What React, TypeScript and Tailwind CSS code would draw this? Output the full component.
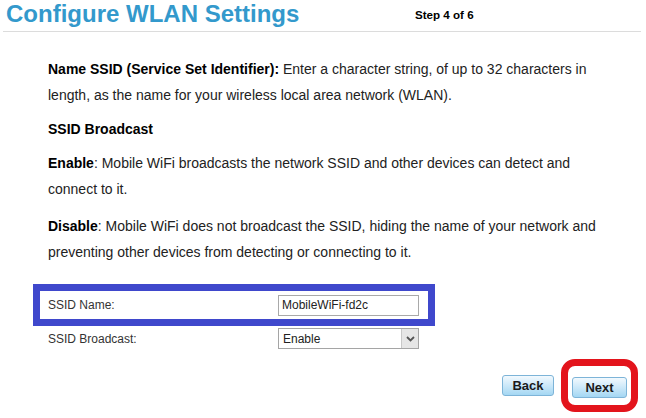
import React from "react";

export default function App() {
  const font = { fontFamily: '"Liberation Sans", Arial, sans-serif' };
  return (
    <div className="w-[646px] h-[418px] bg-white overflow-hidden text-[#222]" style={font}>
      <div className="mx-[3px] w-[638px] h-[32px] border-b border-[#dcdcdc] flex">
        <div className="w-[412px] pl-[3px] text-[24px] leading-[28px] font-bold text-[#3399cc]">
          Configure WLAN Settings
        </div>
        <div className="pt-[1px] text-[11.6px] leading-[28px] font-bold text-black">Step 4 of 6</div>
      </div>

      <div className="pl-[48px] pr-[30px] pt-[24px] text-[14px] leading-[26px]">
        <p className="mb-[8px]">
          <b className="text-black">Name SSID (Service Set Identifier):</b> Enter a character string, of up to 32
          characters in length, as the name for your wireless local area network (WLAN).
        </p>
        <p className="mb-[8px] font-bold text-black">SSID Broadcast</p>
        <p className="mb-[11px]">
          <b className="text-black">Enable</b>: Mobile WiFi broadcasts the network SSID and other devices can detect
          and connect to it.
        </p>
        <p>
          <b className="text-black">Disable</b>: Mobile WiFi does not broadcast the SSID, hiding the name of your
          network and preventing other devices from detecting or connecting to it.
        </p>
      </div>

      <div className="mt-[19px]">
        <div className="ml-[33px] w-[402px] h-[42px] border-[7px] border-[#3f48cc] flex items-center pl-[8px] text-[12px] text-[#333]">
          <div className="w-[230px]">SSID Name:</div>
          <div className="w-[141px] h-[21px] border border-[#a9a9a9] bg-white flex items-center pl-[3px] text-[12px] text-[#222]">
            MobileWiFi-fd2c
          </div>
        </div>
        <div className="mt-[2px] ml-[48px] h-[21px] flex items-center text-[12px] text-[#333]">
          <div className="w-[230px]">SSID Broadcast:</div>
          <div className="w-[141px] h-[21px] border border-[#a5a5a5] bg-white flex items-center text-[12px] text-[#222]">
            <div className="flex-1 pl-[4px]">Enable</div>
            <div className="w-[17px] h-full bg-[#e6e6e6] border-l border-[#c8c8c8] flex items-center justify-center">
              <svg width="9" height="6" viewBox="0 0 9 6">
                <path d="M1 1 L4.5 4.5 L8 1" stroke="#555" strokeWidth="1.8" fill="none" />
              </svg>
            </div>
          </div>
        </div>
      </div>

      <div className="mt-[26px] flex justify-end pr-[19px] gap-[18px]">
        <button className="w-[52px] h-[21px] rounded-[3px] border border-[#7db4d8] bg-gradient-to-b from-[#f2f9fe] to-[#a4d7f3] text-[13px] font-bold text-[#1a1a1a] leading-none">
          Back
        </button>
        <div className="relative">
          <button className="w-[55px] h-[21px] rounded-[3px] border border-[#7db4d8] bg-gradient-to-b from-[#f2f9fe] to-[#a4d7f3] text-[13px] font-bold text-[#1a1a1a] leading-none">
            Next
          </button>
          <div className="absolute left-[-11px] top-[-16px] w-[77px] h-[53px] border-[7px] border-[#e3141c] rounded-[14px]" />
        </div>
      </div>
    </div>
  );
}
